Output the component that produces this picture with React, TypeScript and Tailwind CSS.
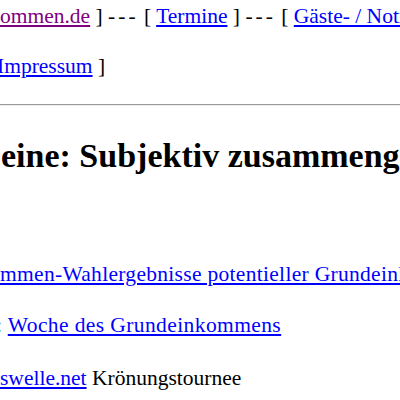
export default function App() {
  return (
    <div className="w-[400px] h-[400px] overflow-hidden bg-white text-black font-['Liberation_Serif','Times_New_Roman',serif] text-[21.5px]">
      <div className="pt-[4px] leading-[24px] whitespace-nowrap">
        <div>
          <a href="#" className="text-[#800080] underline">ommen.de</a> ] <span className="tracking-[3px]">---</span> [{' '}
          <a href="#" className="text-[#0000ff] underline">Termine</a> ] <span className="tracking-[3px]">---</span> [{' '}
          <a href="#" className="text-[#0000ff] underline">Gäste- / Notizbuch</a> ]
        </div>
        <div className="mt-[26px] -ml-[3px]">
          <a href="#" className="text-[#0000ff] underline">Impressum</a> ]
        </div>
      </div>

      <div className="mt-[26px] h-[2px] border-t border-[#9a9a9a] border-b border-b-[#eeeeee]" />

      <h1 className="mt-[30px] ml-[1px] text-[34px] font-bold leading-[40px] whitespace-nowrap">
        eine: Subjektiv zusammengestellt
      </h1>

      <div className="leading-[24px] whitespace-nowrap">
        <div className="mt-[86px] tracking-[0.3px]">
          <a href="#" className="text-[#0000ff] underline">
            mmen-Wahlergebnisse potentieller Grundeinkommensbefürworter
          </a>
        </div>
        <div className="mt-[27px] -ml-[4px] tracking-[0.4px]">
          :{' '}
          <a href="#" className="text-[#0000ff] underline">Woche des Grundeinkommens</a>
        </div>
        <div className="mt-[29px]">
          <a href="#" className="text-[#0000ff] underline">swelle.net</a> Krönungstournee
        </div>
      </div>
    </div>
  )
}
